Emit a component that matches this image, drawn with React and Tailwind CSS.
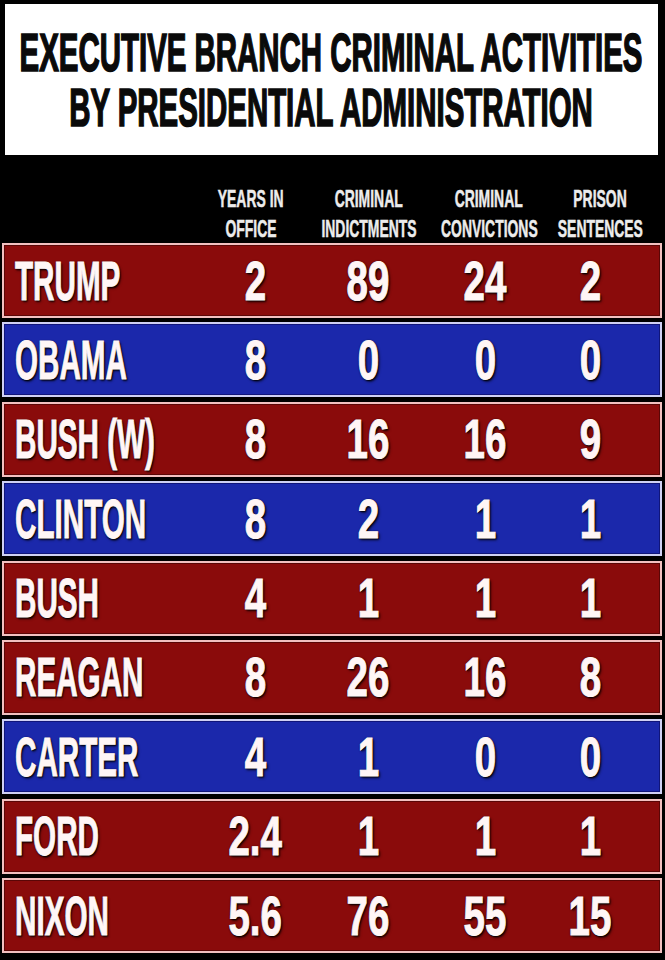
import React from "react";

const rows = [
  { name: "TRUMP", v: ["2", "89", "24", "2"], c: "red" },
  { name: "OBAMA", v: ["8", "0", "0", "0"], c: "blue" },
  { name: "BUSH (W)", v: ["8", "16", "16", "9"], c: "red" },
  { name: "CLINTON", v: ["8", "2", "1", "1"], c: "blue" },
  { name: "BUSH", v: ["4", "1", "1", "1"], c: "red" },
  { name: "REAGAN", v: ["8", "26", "16", "8"], c: "red" },
  { name: "CARTER", v: ["4", "1", "0", "0"], c: "blue" },
  { name: "FORD", v: ["2.4", "1", "1", "1"], c: "red" },
  { name: "NIXON", v: ["5.6", "76", "55", "15"], c: "red" },
];

const headers = [
  ["YEARS IN", "OFFICE"],
  ["CRIMINAL", "INDICTMENTS"],
  ["CRIMINAL", "CONVICTIONS"],
  ["PRISON", "SENTENCES"],
];

const shadow =
  "[text-shadow:0_0_2px_#000,1px_1px_1px_#000,2px_2px_3px_rgba(0,0,0,0.85)] [-webkit-text-stroke:1px_#fff6f6]";

function Row({ r }) {
  const red = r.c === "red";
  return (
    <div
      className={
        "ml-[2px] w-[660px] h-[75px] border-2 grid grid-cols-[193px_116px_110px_124px_86px_27px] items-center " +
        (red
          ? "bg-[#8a0b0b] border-[#f2c0c0] shadow-[inset_0_0_0_1px_#5a0606]"
          : "bg-[#1b28ab] border-[#cfd0f4] shadow-[inset_0_0_0_1px_#10157a]")
      }
    >
      <div className="pl-[11px] whitespace-nowrap h-[52px] flex items-center">
        <span
          className={
            "inline-block origin-left scale-x-[0.57] scale-y-[1.05] text-[52px] leading-[52px] font-bold text-[#fff6f6] " +
            shadow
          }
        >
          {r.name}
        </span>
      </div>
      {r.v.map((val, i) => (
        <div key={i} className="flex justify-center whitespace-nowrap h-[52px] items-center">
          <span
            className={
              "inline-block origin-center scale-x-[0.74] scale-y-[1.05] text-[52px] leading-[52px] font-bold text-[#fff6f6] " +
              shadow
            }
          >
            {val}
          </span>
        </div>
      ))}
      <div />
    </div>
  );
}

export default function App() {
  return (
    <div
      className="w-[665px] h-[960px] bg-black overflow-hidden"
      style={{ fontFamily: '"Liberation Sans", Arial, sans-serif' }}
    >
      <div className="ml-[5px] mt-[4px] w-[653px] h-[151px] bg-white pt-[27px] flex justify-center items-start">
        <span className="inline-block shrink-0 text-center whitespace-nowrap origin-center scale-x-[0.613] scale-y-[1.1] text-[48px] leading-[50px] font-bold text-[#0a0a0a] [-webkit-text-stroke:1.5px_#0a0a0a]">
          EXECUTIVE BRANCH CRIMINAL ACTIVITIES
          <br />
          BY PRESIDENTIAL ADMINISTRATION
        </span>
      </div>

      <div className="ml-[2px] w-[660px] h-[88px] pt-[29px] px-[2px] grid grid-cols-[187px_120px_116px_124px_98px_11px]">
        <div />
        {headers.map((h, i) => (
          <div key={i} className="flex flex-col items-center">
            {h.map((l, j) => (
              <div key={j} className="h-[30px] flex justify-center whitespace-nowrap">
                <span className="inline-block origin-center scale-x-[0.58] text-[24px] leading-[30px] font-bold text-[#ececec] [text-shadow:0_0_2px_#000] [-webkit-text-stroke:0.5px_#ececec]">
                  {l}
                </span>
              </div>
            ))}
          </div>
        ))}
        <div />
      </div>

      <div className="flex flex-col gap-[4.4px]">
        {rows.map((r, i) => (
          <Row key={i} r={r} />
        ))}
      </div>
    </div>
  );
}
